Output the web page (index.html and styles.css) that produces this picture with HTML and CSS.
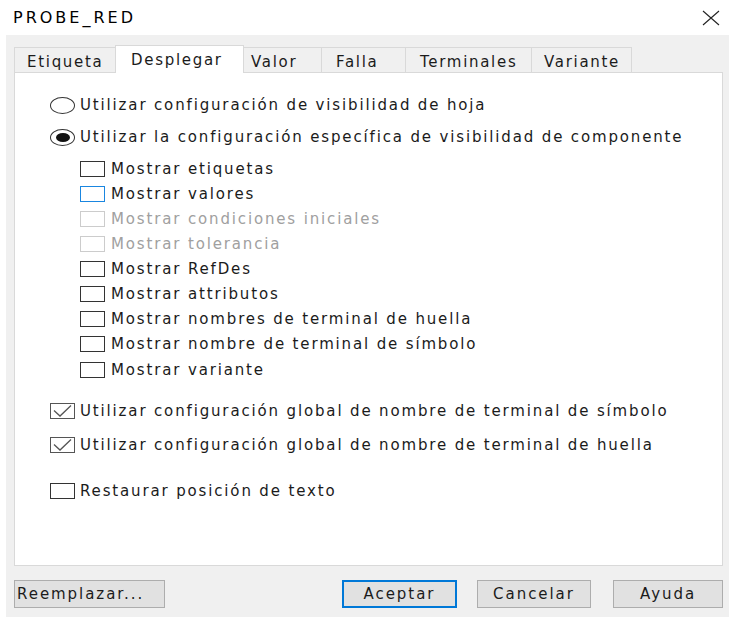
FILE: index.html
```html
<!DOCTYPE html>
<html lang="es">
<head>
<meta charset="utf-8">
<title>PROBE_RED</title>
<link rel="stylesheet" href="styles.css">
</head>
<body>
<div class="window">
  <div class="titlebar">
    <span class="title">PROBE_RED</span>
    <span class="close" aria-label="Cerrar">
      <svg width="18" height="16" viewBox="0 0 18 16"><path d="M1 1 L17 15 M17 1 L1 15" stroke="#222" stroke-width="1.1" fill="none"/></svg>
    </span>
  </div>

  <div class="client">
    <div class="tabs">
      <div class="tab tab-etiqueta">Etiqueta</div>
      <div class="tab tab-desplegar active">Desplegar</div>
      <div class="tab tab-valor">Valor</div>
      <div class="tab tab-falla">Falla</div>
      <div class="tab tab-terminales">Terminales</div>
      <div class="tab tab-variante">Variante</div>
    </div>

    <div class="panel">
      <label class="opt radio-first"><span class="radio"></span><span>Utilizar configuración de visibilidad de hoja</span></label>
      <label class="opt radio-second"><span class="radio on"></span><span>Utilizar la configuración específica de visibilidad de componente</span></label>

      <div class="group">
        <label class="opt"><span class="box"></span><span>Mostrar etiquetas</span></label>
        <label class="opt"><span class="box focus"></span><span>Mostrar valores</span></label>
        <label class="opt disabled"><span class="box"></span><span>Mostrar condiciones iniciales</span></label>
        <label class="opt disabled"><span class="box"></span><span>Mostrar tolerancia</span></label>
        <label class="opt"><span class="box"></span><span>Mostrar RefDes</span></label>
        <label class="opt"><span class="box"></span><span>Mostrar attributos</span></label>
        <label class="opt"><span class="box"></span><span>Mostrar nombres de terminal de huella</span></label>
        <label class="opt"><span class="box"></span><span>Mostrar nombre de terminal de símbolo</span></label>
        <label class="opt last"><span class="box"></span><span>Mostrar variante</span></label>
      </div>

      <label class="opt global-first"><span class="box checked"><svg width="23" height="14" viewBox="0 0 23 14"><polyline points="3,6.5 9,12 20,1.5" fill="none" stroke="#555" stroke-width="1.3"/></svg></span><span>Utilizar configuración global de nombre de terminal de símbolo</span></label>
      <label class="opt global-second"><span class="box checked"><svg width="23" height="14" viewBox="0 0 23 14"><polyline points="3,6.5 9,12 20,1.5" fill="none" stroke="#555" stroke-width="1.3"/></svg></span><span>Utilizar configuración global de nombre de terminal de huella</span></label>

      <label class="opt restore"><span class="box"></span><span>Restaurar posición de texto</span></label>
    </div>

    <div class="buttons">
      <button class="btn btn-replace">Reemplazar...</button>
      <div class="spacer"></div>
      <button class="btn btn-ok default">Aceptar</button>
      <button class="btn btn-cancel">Cancelar</button>
      <button class="btn btn-help">Ayuda</button>
    </div>
  </div>
</div>
</body>
</html>
```

FILE: styles.css
```css
* {
  box-sizing: border-box;
}

html, body {
  margin: 0;
  padding: 0;
  background: #ffffff;
}

body {
  width: 729px;
  height: 617px;
  overflow: hidden;
  font-family: "DejaVu Sans", Verdana, sans-serif;
  font-size: 15px;
  letter-spacing: 1.85px;
  color: #1b1b1b;
}

.window {
  display: flex;
  flex-direction: column;
  height: 617px;
}

/* title bar */
.titlebar {
  height: 35px;
  flex: 0 0 35px;
  display: flex;
  align-items: center;
  justify-content: space-between;
  padding: 0 9px 0 13px;
  background: #ffffff;
}

.title {
  font-size: 16px;
  letter-spacing: 3px;
  color: #000;
}

.close {
  display: flex;
  align-items: center;
}

/* client area */
.client {
  flex: 1;
  margin-left: 6px;
  background: #f0f0f0;
  padding: 10px 6px 0 8px;
  display: flex;
  flex-direction: column;
}

/* tab strip */
.tabs {
  display: flex;
  align-items: flex-end;
  height: 27px;
}

.tab {
  height: 25px;
  display: flex;
  align-items: center;
  padding: 3px 0 0 12px;
  background: #f0f0f0;
  border: 1px solid #d9d9d9;
  border-bottom: none;
  margin-right: -1px;
  color: #1b1b1b;
  letter-spacing: 1.7px;
  white-space: nowrap;
}

.tab.active {
  height: 28px;
  margin-bottom: -1px;
  margin-left: -2px;
  margin-right: -3px;
  padding: 0 0 0 15px;
  background: #ffffff;
  position: relative;
  z-index: 1;
}

.tab-etiqueta { width: 104px; }
.tab-desplegar { width: 129px; }
.tab-valor { width: 81px; padding-left: 9px; }
.tab-falla { width: 85px; padding-left: 14px; }
.tab-terminales { width: 127px; padding-left: 14px; }
.tab-variante { width: 101px; padding-left: 12px; }

/* page content */
.panel {
  height: 494px;
  background: #ffffff;
  border: 1px solid #d9d9d9;
  padding: 20px 0 0 35px;
  display: flex;
  flex-direction: column;
}

.opt {
  display: flex;
  align-items: center;
  height: 24px;
  gap: 5px;
  white-space: nowrap;
}

.radio-second { margin-top: 8px; }

.group {
  margin-top: 7px;
  margin-left: 30px;
  display: flex;
  flex-direction: column;
}

.group .opt {
  height: 25px;
  gap: 6px;
}

.group .opt.last { margin-top: 1px; }

.global-first { margin-top: 17px; }
.global-second { margin-top: 10px; }
.restore { margin-top: 22px; }

.radio {
  width: 25px;
  height: 17px;
  flex: 0 0 25px;
  border: 1px solid #333;
  border-radius: 50%;
  display: flex;
  align-items: center;
  justify-content: center;
}

.radio.on::after {
  content: "";
  width: 14px;
  height: 9px;
  border-radius: 50%;
  background: #111;
}

.box {
  width: 25px;
  height: 16px;
  flex: 0 0 25px;
  border: 1px solid #333;
  background: #fff;
  display: flex;
}

.box.focus { border-color: #1a86e0; }

.opt.disabled { color: #a0a0a0; }
.opt.disabled .box { border-color: #cccccc; }

.box.checked { border-color: #555; }

/* dialog buttons */
.buttons {
  margin-top: 14px;
  display: flex;
  gap: 20px;
  height: 28px;
}

.spacer { flex: 1; }

.btn {
  height: 28px;
  font-family: inherit;
  font-size: 15px;
  letter-spacing: 1.95px;
  color: #1b1b1b;
  background: #e1e1e1;
  border: 1px solid #adadad;
  padding: 0;
}

.btn-replace {
  width: 151px;
  text-align: left;
  padding-left: 2px;
}

.btn-ok {
  width: 115px;
  border: 2px solid #0078d7;
}

.btn-cancel { width: 114px; }
.btn-help { width: 110px; margin-left: 2px; }
```
